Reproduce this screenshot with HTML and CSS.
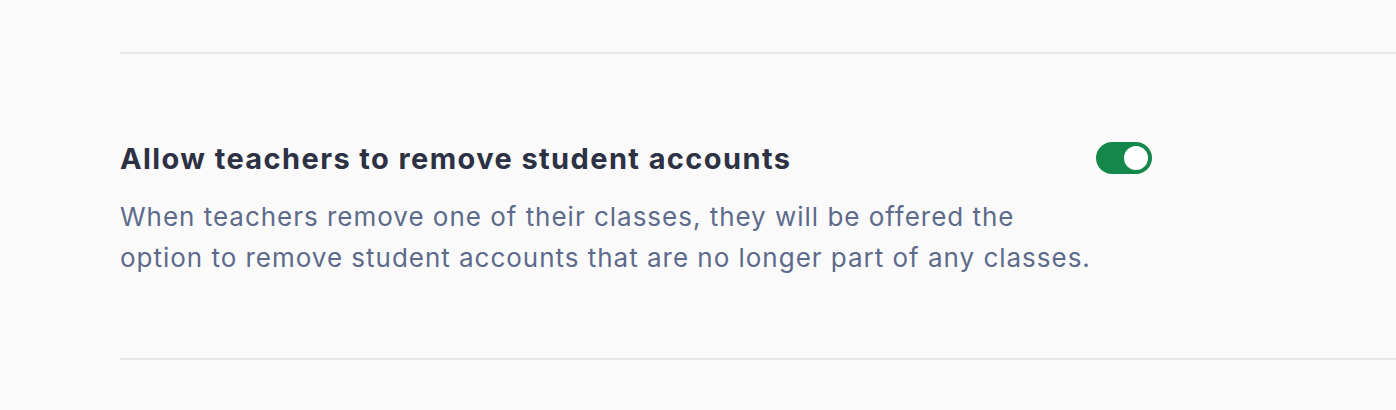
FILE: index.html
```html
<!DOCTYPE html>
<html>
<head>
<meta charset="utf-8">
<link rel="stylesheet" href="styles.css">
</head>
<body>
<div class="page">
  <section class="setting">
    <div class="setting-text">
      <h2 class="setting-title">Allow teachers to remove student accounts</h2>
      <p class="setting-desc">When teachers remove one of their classes, they will be offered the option to remove student accounts that are no longer part of any classes.</p>
    </div>
    <button class="toggle" aria-pressed="true"><span class="knob"></span></button>
  </section>
</div>
</body>
</html>
```
FILE: styles.css
```css
html, body {
  margin: 0;
  padding: 0;
  background: #fafafa;
}
body {
  font-family: Inter, "Noto Sans", sans-serif;
}
.page {
  padding: 52px 0 0 120px;
}
.setting {
  border-top: 2px solid #e8e8e8;
  border-bottom: 2px solid #e8e8e8;
  height: 308px;
  box-sizing: border-box;
  display: flex;
  align-items: flex-start;
  padding-top: 86px;
}
.setting-text {
  width: 976px;
}
.setting-title {
  margin: 0;
  font-size: 29px;
  font-weight: 700;
  line-height: 38px;
  letter-spacing: 1.4px;
  color: #2c3144;
}
.setting-desc {
  margin: 18px 0 0;
  font-size: 26px;
  line-height: 41px;
  letter-spacing: 0.98px;
  color: #5d6a8c;
}
.toggle {
  margin: 2px 0 0;
  width: 56px;
  height: 32px;
  border: none;
  border-radius: 16px;
  background: #14874b;
  padding: 4px;
  display: flex;
  justify-content: flex-end;
  align-items: center;
  box-sizing: border-box;
}
.knob {
  width: 24px;
  height: 24px;
  border-radius: 50%;
  background: #fff;
}
```
